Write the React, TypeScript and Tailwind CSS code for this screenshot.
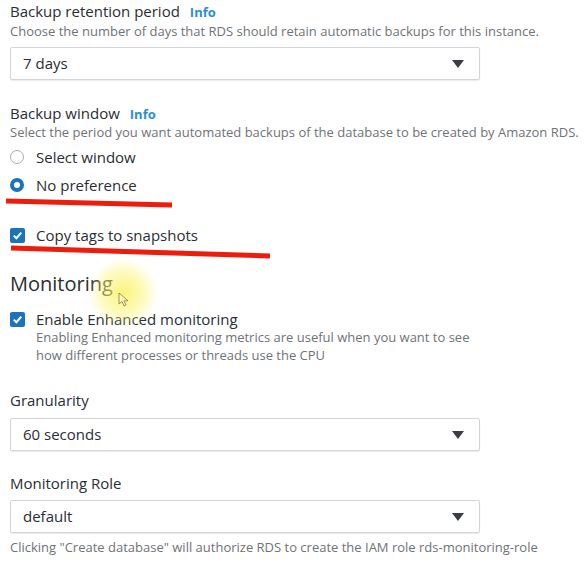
import React from 'react';

const Arrow = () => (
  <svg width="14" height="10" viewBox="0 0 14 10" className="shrink-0">
    <path d="M1 1 H13 L7 9 Z" fill="#3b3f45" />
  </svg>
);

const Select = ({ value }: { value: string }) => (
  <div className="flex h-[33px] w-[470px] items-center justify-between rounded-[2px] border border-[#d2d6d8] bg-white pl-[12px] pr-[14px] shadow-[0_1px_1px_rgba(0,0,0,0.08)]">
    <span className="text-[15px] text-[#2a2e33]">{value}</span>
    <Arrow />
  </div>
);

const Check = () => (
  <span className="flex h-[15px] w-[15px] items-center justify-center rounded-[2px] bg-[#1b74bb]">
    <svg width="11" height="11" viewBox="0 0 11 11">
      <path d="M1.8 5.6 L4.4 8.2 L9.3 2.6" stroke="white" strokeWidth="2" fill="none" />
    </svg>
  </span>
);

const Info = () => <span className="ml-[10px] text-[13px] font-bold text-[#2b8fd0]">Info</span>;

export default function App() {
  return (
    <div
      className="relative h-[569px] w-[587px] overflow-hidden bg-white text-[#2a2e33]"
      style={{ fontFamily: '"Open Sans", "Liberation Sans", sans-serif' }}
    >
      <div className="flex flex-col pl-[10px] pt-[1px]">
        <div className="flex items-baseline text-[15px] leading-[20px]">
          Backup retention period <Info />
        </div>
        <div className="text-[13px] leading-[18px] text-[#6f7378]">
          Choose the number of days that RDS should retain automatic backups for this instance.
        </div>
        <div className="mt-[7px]">
          <Select value="7 days" />
        </div>

        <div className="mt-[23px] flex items-baseline text-[15px] leading-[20px]">
          Backup window <Info />
        </div>
        <div className="text-[13px] leading-[17px] text-[#6f7378]">
          Select the period you want automated backups of the database to be created by Amazon RDS.
        </div>
        <div className="mt-[6px] flex items-center gap-[12px] text-[15px] leading-[20px]">
          <span className="h-[14px] w-[14px] rounded-full border border-[#a9adb1] bg-white" />
          Select window
        </div>
        <div className="mt-[8px] flex items-center gap-[12px] text-[15px] leading-[20px]">
          <span className="flex h-[14px] w-[14px] items-center justify-center rounded-full bg-[#1b74bb]">
            <span className="h-[6px] w-[6px] rounded-full bg-white" />
          </span>
          No preference
        </div>

        <div className="mt-[30px] flex items-center gap-[11px] text-[15px] leading-[20px]">
          <Check />
          Copy tags to snapshots
        </div>

        <div className="mt-[26px] text-[20px] leading-[26px] text-[#2a2e33]">Monitoring</div>
        <div className="mt-[12px] flex items-center gap-[11px] text-[15px] leading-[20px]">
          <Check />
          Enable Enhanced monitoring
        </div>
        <div className="-mt-[1px] ml-[26px] text-[13px] leading-[18px] text-[#6f7378]">
          <div>Enabling Enhanced monitoring metrics are useful when you want to see</div>
          <div>how different processes or threads use the CPU</div>
        </div>

        <div className="mt-[26px] text-[15px] leading-[20px]">Granularity</div>
        <div className="mt-[8px]">
          <Select value="60 seconds" />
        </div>

        <div className="mt-[22px] text-[15px] leading-[20px]">Monitoring Role</div>
        <div className="mt-[7px]">
          <Select value="default" />
        </div>
        <div className="mt-[5px] text-[13px] leading-[18px] text-[#6f7378]">
          Clicking "Create database" will authorize RDS to create the IAM role rds-monitoring-role
        </div>
      </div>

      {/* annotations drawn over the screen */}
      <svg className="pointer-events-none absolute left-0 top-0" width="587" height="569">
        <path d="M6 201 L172 205" stroke="#ee1c0c" strokeWidth="5" />
        <path d="M11 248 L270 256" stroke="#ee1c0c" strokeWidth="5" />
      </svg>
      <div className="pointer-events-none absolute left-[88px] top-[258px] h-[70px] w-[70px] rounded-full bg-[radial-gradient(circle,rgba(250,240,80,0.75)_0%,rgba(252,245,120,0.45)_45%,rgba(255,255,255,0)_70%)]" />
      <svg className="pointer-events-none absolute left-[118px] top-[292px]" width="12" height="16" viewBox="0 0 12 16">
        <path d="M1 1 L1 12 L4 9.5 L6 14 L8 13 L6 8.8 L10 8.8 Z" fill="#fff7c0" stroke="#8a7a40" strokeWidth="0.8" />
      </svg>
    </div>
  );
}
